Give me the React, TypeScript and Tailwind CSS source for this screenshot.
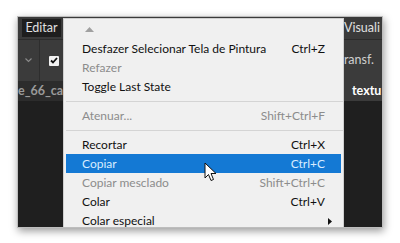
import React from 'react';

type Item =
  | { kind: 'item'; label: string; shortcut?: string; disabled?: boolean; active?: boolean; submenu?: boolean }
  | { kind: 'sep' };

const itens: Item[] = [
  { kind: 'item', label: 'Desfazer Selecionar Tela de Pintura', shortcut: 'Ctrl+Z' },
  { kind: 'item', label: 'Refazer', disabled: true },
  { kind: 'item', label: 'Toggle Last State' },
  { kind: 'sep' },
  { kind: 'item', label: 'Atenuar...', shortcut: 'Shift+Ctrl+F', disabled: true },
  { kind: 'sep' },
  { kind: 'item', label: 'Recortar', shortcut: 'Ctrl+X' },
  { kind: 'item', label: 'Copiar', shortcut: 'Ctrl+C', active: true },
  { kind: 'item', label: 'Copiar mesclado', shortcut: 'Shift+Ctrl+C', disabled: true },
  { kind: 'item', label: 'Colar', shortcut: 'Ctrl+V' },
  { kind: 'item', label: 'Colar especial', submenu: true },
];

function MenuEditar() {
  return (
    <div className="absolute left-[45px] top-[1px] w-[281px] h-[230px] bg-[#f0f0f0] border border-[#cfcfcf] text-[12px] text-[#111]">
      <div className="h-[20px] flex items-center pl-[21px]">
        <svg width="9" height="5" viewBox="0 0 9 5">
          <polygon points="0,5 4.5,0 9,5" fill="#a0a0a0" />
        </svg>
      </div>
      {itens.map((item, i) =>
        item.kind === 'sep' ? (
          <div key={i} className="h-[10px] flex items-center pl-[2px]">
            <div className="h-px w-full bg-[#d4d4d4]" />
          </div>
        ) : (
          <div
            key={i}
            className={
              'h-[19px] flex items-center justify-between pl-[16px] pr-[16px] mx-[2px] pt-px ' +
              (item.active ? 'bg-[#1479d4] text-[#d8ecff]' : item.disabled ? 'text-[#8c8c8c]' : '')
            }
          >
            <span>{item.label}</span>
            {item.shortcut && <span>{item.shortcut}</span>}
            {item.submenu && (
              <svg width="4" height="7" viewBox="0 0 4 7" className="mr-[-7px]">
                <polygon points="0,0 4,3.5 0,7" fill="#111" />
              </svg>
            )}
          </div>
        )
      )}
      {/* cursor */}
      <svg className="absolute left-[140px] top-[143px]" width="13" height="20" viewBox="0 0 13 20">
        <path d="M1 1 L1 16 L4.5 12.5 L7 18.5 L9.5 17.5 L7 11.5 L12 11.5 Z" fill="#fff" stroke="#111" strokeWidth="1" strokeLinejoin="round" />
      </svg>
    </div>
  );
}

export default function App() {
  return (
    <div className="w-[400px] h-[243px] bg-white relative" style={{ fontFamily: 'Lato, "Noto Sans", sans-serif' }}>
      <div className="absolute left-[17px] top-[16px] w-[366px] h-[212px] border border-[#bdbdbd] overflow-hidden bg-[#1f1f1f] shadow-[1px_3px_8px_rgba(0,0,0,0.4)]">
        <div className="h-[22px] bg-[#3a3a3a] flex items-center text-[12.5px] text-[#e0e0e0]">
          <div className="ml-[4px] h-[18px] w-[39px] bg-[#1e1e1e] flex items-center justify-center">Editar</div>
          <div className="ml-auto mr-[2px]">Visuali</div>
        </div>
        <div className="h-[42px] bg-[#3b3b3b] flex items-center border-t border-[#2c2c2c] text-[12.5px] text-[#cfcfcf]">
          <div className="w-[22px] h-full flex items-center justify-center border-r border-[#2e2e2e]">
            <svg width="7" height="5" viewBox="0 0 7 5">
              <polyline points="0.5,0.5 3.5,3.5 6.5,0.5" fill="none" stroke="#8a8a8a" strokeWidth="1.2" />
            </svg>
          </div>
          <div className="ml-[9px] w-[10px] h-[10px] bg-[#f2f2f2] rounded-[1px] flex items-center justify-center">
            <svg width="8" height="7" viewBox="0 0 8 7">
              <polyline points="1,3.5 3,5.5 7,1" fill="none" stroke="#111" strokeWidth="1.8" />
            </svg>
          </div>
          <div className="ml-auto mr-[8px]">ransf.</div>
        </div>
        <div className="h-[20px] flex items-center text-[12.5px] font-bold">
          <div className="h-full w-[45px] bg-[#2c2c2c] text-[#9a9a9a] flex items-center">e_66_ca</div>
          <div className="ml-auto h-full w-[40px] bg-[#3b3b3b] text-white flex items-center pl-[10px]">textu</div>
        </div>
        <MenuEditar />
      </div>
    </div>
  );
}
